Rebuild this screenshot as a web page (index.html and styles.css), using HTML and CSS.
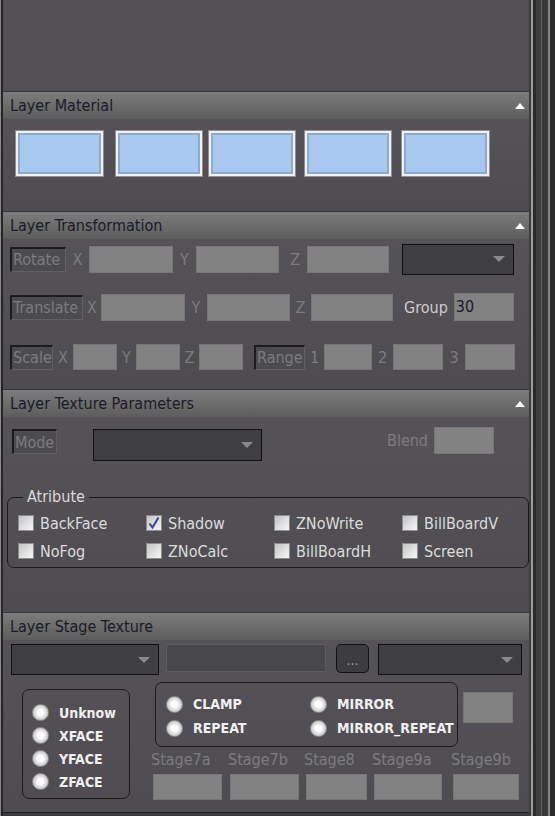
FILE: index.html
```html
<!DOCTYPE html>
<html>
<head>
<meta charset="utf-8">
<title>Layer Panel</title>
<link rel="stylesheet" href="styles.css">
</head>
<body>
<div class="frame">
  <div class="edge-left"></div>
  <div class="panel">
    <div class="blank"></div>

    <div class="hdr col">Layer Material</div>
    <div class="body b1">
      <div class="swatches">
        <div class="sw"></div>
        <div class="sw"></div>
        <div class="sw"></div>
        <div class="sw"></div>
        <div class="sw"></div>
      </div>
    </div>

    <div class="hdr col">Layer Transformation</div>
    <div class="body b2">
      <div class="row r1">
        <div class="lbl w56">Rotate</div>
        <span class="ax w23">X</span>
        <div class="inp w84"></div>
        <span class="ax w23">Y</span>
        <div class="inp w83"></div>
        <span class="ax w28 axr">Z</span>
        <div class="inp w82"></div>
        <div class="combo w112 ml13"></div>
      </div>
      <div class="row r2">
        <div class="lbl w73">Translate</div>
        <span class="ax w18">X</span>
        <div class="inp w84"></div>
        <span class="ax w22">Y</span>
        <div class="inp w83"></div>
        <span class="ax w21">Z</span>
        <div class="inp w82"></div>
        <span class="grp">Group</span>
        <div class="inp w60 val">30</div>
      </div>
      <div class="row r3">
        <div class="lbl w43">Scale</div>
        <span class="ax w20">X</span>
        <div class="inp w44 h26"></div>
        <span class="ax w19">Y</span>
        <div class="inp w44 h26"></div>
        <span class="ax w19">Z</span>
        <div class="inp w44 h26"></div>
        <div class="lbl w51 ml11">Range</div>
        <span class="ax w19">1</span>
        <div class="inp w48 h26"></div>
        <span class="ax w21">2</span>
        <div class="inp w50 h26"></div>
        <span class="ax w22">3</span>
        <div class="inp w50 h26"></div>
      </div>
    </div>

    <div class="hdr col">Layer Texture Parameters</div>
    <div class="body b3">
      <div class="moderow">
        <div class="lbl w45 mt2">Mode</div>
        <div class="combo w169 h32 mt2 ml36"></div>
        <span class="blend">Blend</span>
        <div class="inp w60"></div>
      </div>
      <fieldset class="attr">
        <legend>Atribute</legend>
        <div class="cbgrid">
          <label class="cb"><span class="box"></span>BackFace</label>
          <label class="cb"><span class="box"><svg width="14" height="14" viewBox="0 0 14 14"><path d="M2.5 7.5 L5.5 11.5 L11.5 1.5" fill="none" stroke="#34449c" stroke-width="2"/></svg></span>Shadow</label>
          <label class="cb"><span class="box"></span>ZNoWrite</label>
          <label class="cb"><span class="box"></span>BillBoardV</label>
          <label class="cb"><span class="box"></span>NoFog</label>
          <label class="cb"><span class="box"></span>ZNoCalc</label>
          <label class="cb"><span class="box"></span>BillBoardH</label>
          <label class="cb"><span class="box"></span>Screen</label>
        </div>
      </fieldset>
    </div>

    <div class="hdr">Layer Stage Texture</div>
    <div class="body b4">
      <div class="strow">
        <div class="combo w148"></div>
        <div class="dark w160 ml7"></div>
        <div class="btn ml10">...</div>
        <div class="combo w144 ml9"></div>
      </div>
      <div class="lower">
        <div class="rgroup left">
          <div class="rrow"><span class="rd"></span><span class="rl">Unknow</span></div>
          <div class="rrow"><span class="rd"></span><span class="rl">XFACE</span></div>
          <div class="rrow"><span class="rd"></span><span class="rl">YFACE</span></div>
          <div class="rrow"><span class="rd"></span><span class="rl">ZFACE</span></div>
        </div>
        <div class="stcol">
          <div class="toprow">
            <div class="rgroup right">
              <div class="rrow"><span class="rd"></span><span class="rl">CLAMP</span></div>
              <div class="rrow"><span class="rd"></span><span class="rl">MIRROR</span></div>
              <div class="rrow"><span class="rd"></span><span class="rl">REPEAT</span></div>
              <div class="rrow"><span class="rd"></span><span class="rl">MIRROR_REPEAT</span></div>
            </div>
            <div class="inp small"></div>
          </div>
          <div class="stages">
            <div class="stage"><span>Stage7a</span><div class="inp w69"></div></div>
            <div class="stage"><span>Stage7b</span><div class="inp w69"></div></div>
            <div class="stage"><span>Stage8</span><div class="inp w61"></div></div>
            <div class="stage"><span>Stage9a</span><div class="inp w68"></div></div>
            <div class="stage"><span>Stage9b</span><div class="inp w66"></div></div>
          </div>
        </div>
      </div>
    </div>
    <div class="foot"></div>
  </div>
  <div class="edge-right"></div>
</div>
</body>
</html>
```

FILE: styles.css
```css
* { box-sizing: border-box; }
html, body { margin: 0; padding: 0; }
body {
  width: 555px;
  height: 816px;
  overflow: hidden;
  background: #2b2b2b;
  font-family: "DejaVu Sans Condensed", "DejaVu Sans", sans-serif;
  font-stretch: condensed;
  font-size: 16px;
}
.frame { display: flex; height: 816px; }
.edge-left {
  width: 3px;
  flex: none;
  background: linear-gradient(to right, #8a8a8a 0 1px, #262626 1px 3px);
}
.edge-right {
  width: 26px;
  flex: none;
  background: linear-gradient(to right,
    #3c3c3c 0 2px, #9c9c9c 2px 4px, #2a2a2a 4px 7px, #3e3e3e 7px 12px,
    #636363 12px 13px, #393939 13px 19px, #878787 19px 21px, #2b2b2b 21px 26px);
}
.panel {
  width: 526px;
  flex: none;
  display: flex;
  flex-direction: column;
  background: #525055;
}
.blank { height: 91px; flex: none; background: #525055; }

.hdr {
  height: 28px;
  flex: none;
  border-top: 1px solid #37363a;
  background: linear-gradient(#7c7c7c, #5d5d5d);
  display: flex;
  align-items: center;
  padding: 0 4px 0 7px;
  color: #1b1b29;
  line-height: 1;
}
.hdr.col::after {
  content: "";
  margin-left: auto;
  border-left: 5.5px solid transparent;
  border-right: 5.5px solid transparent;
  border-bottom: 6px solid #ffffff;
}
.body {
  flex: none;
  background: linear-gradient(#555358, #4e4c50);
}

/* material */
.b1 { height: 92px; padding: 11px 0 0 12px; }
.swatches { display: flex; }
.sw {
  width: 88px;
  height: 47px;
  border: 1px solid #8e8e8e;
  background: #a7c9f0;
  box-shadow: inset 0 0 0 2px #f1f1f1, inset 0 0 0 4px #8ea9cb;
}
.sw:nth-child(1) { width: 89px; }
.sw:nth-child(2) { margin-left: 11px; }
.sw:nth-child(3) { margin-left: 5px; }
.sw:nth-child(4) { margin-left: 8px; }
.sw:nth-child(5) { margin-left: 9px; width: 89px; }

/* transformation */
.b2 { height: 150px; padding: 2px 0 0 7px; display: flex; flex-direction: column; }
.row { display: flex; align-items: center; height: 36px; flex: none; }
.r2 { margin-top: 12px; }
.r3 { margin-top: 14px; }

.lbl {
  height: 25px;
  flex: none;
  border-top: 2px solid #1c1c1e;
  border-left: 2px solid #1c1c1e;
  border-right: 1px solid #605f63;
  border-bottom: 1px solid #605f63;
  background: #4c4b4f;
  color: #7c7c7c;
  display: flex;
  align-items: center;
  padding: 0 1px;
  overflow: hidden;
  white-space: nowrap;
}
.ax { color: #7c7c7c; text-align: center; flex: none; }
.axr { text-align: right; padding-right: 7px; }
.inp {
  height: 27px;
  flex: none;
  background: #828282;
  border: 1px solid #767676;
}
.val { color: #1a1a2a; padding-left: 1px; line-height: 25px; height: 28px; }
.grp { color: #cdcdcd; margin-left: 11px; margin-right: 6px; flex: none; }
.combo {
  height: 31px;
  flex: none;
  background: #3f3e41;
  border: 1px solid #111111;
  display: flex;
  align-items: center;
  justify-content: flex-end;
  padding-right: 8px;
}
.combo::after {
  content: "";
  border-left: 6px solid transparent;
  border-right: 6px solid transparent;
  border-top: 6px solid #8a8a8a;
}

.w18 { width: 18px; } .w19 { width: 19px; } .w20 { width: 20px; } .w21 { width: 21px; }
.w22 { width: 22px; } .w23 { width: 23px; } .w28 { width: 28px; }
.w43 { width: 43px; } .w44 { width: 44px; } .w45 { width: 45px; } .w48 { width: 48px; }
.w50 { width: 50px; } .w51 { width: 51px; } .w56 { width: 56px; } .w60 { width: 60px; }
.w61 { width: 61px; } .w66 { width: 66px; } .w68 { width: 68px; } .w69 { width: 69px; }
.w73 { width: 73px; } .w82 { width: 82px; } .w83 { width: 83px; } .w84 { width: 84px; }
.w112 { width: 112px; } .w144 { width: 144px; } .w148 { width: 148px; }
.w160 { width: 160px; } .w169 { width: 169px; }
.h26 { height: 26px; } .h32 { height: 32px; }
.ml7 { margin-left: 7px; } .ml9 { margin-left: 9px; } .ml10 { margin-left: 10px; }
.ml11 { margin-left: 11px; } .ml13 { margin-left: 13px; } .ml36 { margin-left: 36px; }
.mt2 { margin-top: 2px; }

/* texture parameters */
.b3 { height: 195px; }
.moderow {
  display: flex;
  align-items: flex-start;
  height: 44px;
  padding: 10px 35px 0 9px;
}
.blend { margin-left: auto; margin-right: 6px; color: #7c7c7c; line-height: 27px; }
.attr {
  margin: 26px 0 0 4px;
  border: 1px solid #1b1b1b;
  border-radius: 7px;
  padding: 2px 0 2px 10px;
  min-width: 0;
}
.attr legend {
  padding: 0 4px;
  margin-left: 5px;
  color: #d9d9d9;
  line-height: 20px;
}
.cbgrid {
  display: grid;
  grid-template-columns: repeat(4, 128px);
  grid-auto-rows: 28px;
}
.cb { display: flex; align-items: center; gap: 6px; color: #dcdcdc; white-space: nowrap; }
.box {
  width: 16px;
  height: 16px;
  flex: none;
  border: 1px solid #8c8c8c;
  background: linear-gradient(135deg, #c4c4c4, #f6f6f6);
  display: flex;
  align-items: center;
  justify-content: center;
}

/* stage texture */
.b4 { height: 172px; padding: 4px 0 0 8px; }
.strow { display: flex; align-items: flex-start; }
.dark {
  height: 28px;
  flex: none;
  background: #48474b;
  border: 1px solid #5d5c60;
}
.btn {
  width: 33px;
  height: 29px;
  flex: none;
  background: #3d3c40;
  border: 1px solid #121212;
  border-radius: 5px;
  color: #9a9a9a;
  font-size: 14px;
  display: flex;
  align-items: flex-end;
  justify-content: center;
  padding-bottom: 4px;
}
.lower { display: flex; align-items: flex-start; margin: 7px 0 0 11px; }
.rgroup {
  border: 1px solid #1b1b1b;
  border-radius: 7px;
  flex: none;
}
.rgroup.left {
  width: 108px;
  height: 110px;
  margin-top: 7px;
  padding: 11px 0 0 9px;
  display: flex;
  flex-direction: column;
}
.rgroup.right {
  width: 303px;
  height: 65px;
  padding: 9px 0 0 10px;
  display: grid;
  grid-template-columns: 144px 150px;
  grid-auto-rows: 24px;
  overflow: hidden;
}
.rrow { display: flex; align-items: center; height: 23px; gap: 10px; white-space: nowrap; }
.rgroup.right .rrow { height: 24px; }
.rd {
  width: 17px;
  height: 17px;
  flex: none;
  border-radius: 50%;
  border: 1px solid #8d8d8d;
  background: radial-gradient(circle at 50% 50%, #ffffff 0 28%, #d9d9d9 55%, #a9a9a9 100%);
}
.rl {
  color: #f0f0f0;
  font-weight: bold;
  font-size: 14px;
  line-height: 16px;
}
.stcol { display: flex; flex-direction: column; margin-left: 21px; }
.toprow { display: flex; align-items: flex-start; margin-left: 4px; }
.small { width: 50px; height: 31px; margin: 10px 0 0 5px; }
.stages {
  display: grid;
  grid-template-columns: 77px 76px 68px 79px 68px;
  margin-top: 3px;
}
.stage { display: flex; flex-direction: column; }
.stage span { color: #7c7c7c; line-height: 20px; white-space: nowrap; }
.stage .inp { height: 26px; margin: 4px 0 0 2px; }
.foot { flex: 1; background: #3a393c; border-top: 1px solid #232323; }
```
